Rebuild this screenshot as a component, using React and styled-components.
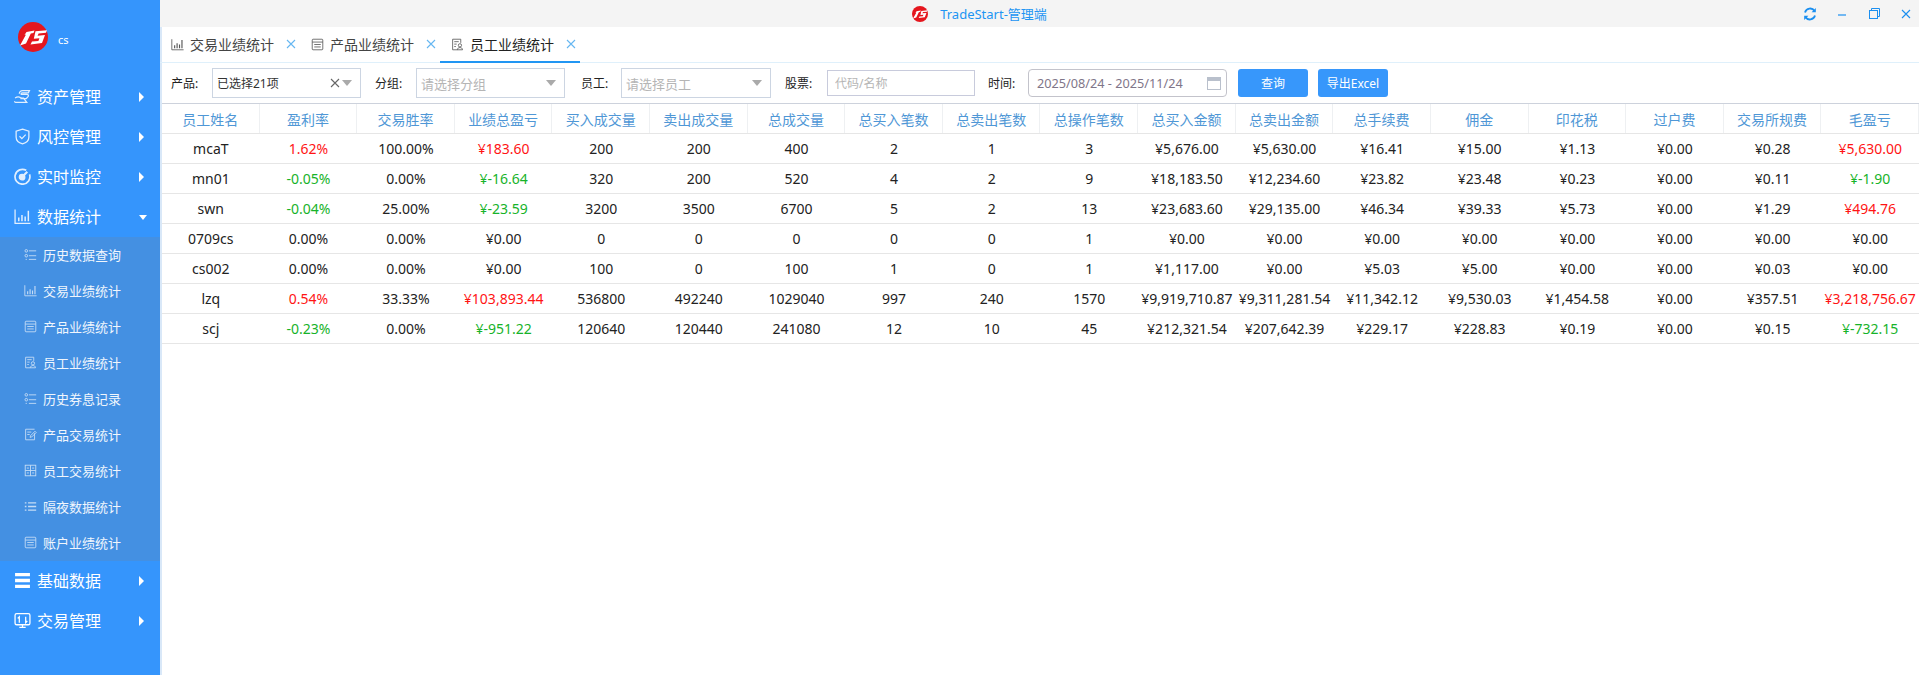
import React from 'react';
import styled, { createGlobalStyle } from 'styled-components';

const columns = [
	'员工姓名', '盈利率', '交易胜率', '业绩总盈亏', '买入成交量', '卖出成交量', '总成交量', '总买入笔数', '总卖出笔数',
	'总操作笔数', '总买入金额', '总卖出金额', '总手续费', '佣金', '印花税', '过户费', '交易所规费', '毛盈亏',
];

const rows = [
	['mcaT', '1.62%', '100.00%', '¥183.60', '200', '200', '400', '2', '1', '3', '¥5,676.00', '¥5,630.00', '¥16.41', '¥15.00', '¥1.13', '¥0.00', '¥0.28', '¥5,630.00'],
	['mn01', '-0.05%', '0.00%', '¥-16.64', '320', '200', '520', '4', '2', '9', '¥18,183.50', '¥12,234.60', '¥23.82', '¥23.48', '¥0.23', '¥0.00', '¥0.11', '¥-1.90'],
	['swn', '-0.04%', '25.00%', '¥-23.59', '3200', '3500', '6700', '5', '2', '13', '¥23,683.60', '¥29,135.00', '¥46.34', '¥39.33', '¥5.73', '¥0.00', '¥1.29', '¥494.76'],
	['0709cs', '0.00%', '0.00%', '¥0.00', '0', '0', '0', '0', '0', '1', '¥0.00', '¥0.00', '¥0.00', '¥0.00', '¥0.00', '¥0.00', '¥0.00', '¥0.00'],
	['cs002', '0.00%', '0.00%', '¥0.00', '100', '0', '100', '1', '0', '1', '¥1,117.00', '¥0.00', '¥5.03', '¥5.00', '¥0.00', '¥0.00', '¥0.03', '¥0.00'],
	['lzq', '0.54%', '33.33%', '¥103,893.44', '536800', '492240', '1029040', '997', '240', '1570', '¥9,919,710.87', '¥9,311,281.54', '¥11,342.12', '¥9,530.03', '¥1,454.58', '¥0.00', '¥357.51', '¥3,218,756.67'],
	['scj', '-0.23%', '0.00%', '¥-951.22', '120640', '120440', '241080', '12', '10', '45', '¥212,321.54', '¥207,642.39', '¥229.17', '¥228.83', '¥0.19', '¥0.00', '¥0.15', '¥-732.15'],
];

// columns coloured by the sign of their value
const signedColumns = [1, 3, 17];

const toneOf = (value, index) => {
	if (!signedColumns.includes(index)) return 'plain';
	if (value.includes('-')) return 'down';
	return /[1-9]/.test(value) ? 'up' : 'plain';
};

const Logo = ({ size }) => (
	<svg width={size} height={size} viewBox="0 0 30 30">
		<circle cx="15" cy="15" r="15" fill="#e5161d" />
		<path d="M8.5 10 L16.5 8.5 L15.5 11 L12.8 11.6 L8 21.5 L2 23.5 L8 12.6 L6.5 13 Z" fill="#fff" />
		<path d="M17.5 9.2 L29 8.2 L28 10.8 L20.6 11.4 L19.6 13.8 L27 13 L24 21 L12.5 22.4 L14 19.6 L20.4 19 L21.4 16.2 L15.8 16.8 Z" fill="#fff" />
	</svg>
);

const Line = ({ children, size = 16, strokeWidth = 1.2 }) => (
	<svg width={size} height={size} viewBox="0 0 16 16" fill="none" stroke="currentColor" strokeWidth={strokeWidth}>
		{children}
	</svg>
);

const icons = {
	asset: (
		<>
			<path d="M5 5.5C5 3.5 6.5 2.5 8 2.5H14.5L13.5 4.5H8C7 4.5 6.5 5 6.8 6H12C13.5 6 14 7 13.2 8.2L11.5 10H6" />
			<path d="M1 9.5C3 8 4.5 8 6 9C7 9.6 8 9.6 9 9.6L12 13.5H1.5C0.8 13.5 0.5 13 0.8 12.5" />
		</>
	),
	shield: (
		<>
			<path d="M8 1L14 3V8.5C14 12 11 14.2 8 15C5 14.2 2 12 2 8.5V3Z" />
			<path d="M5.2 7.8L7.4 10L11 6.2" />
		</>
	),
	gauge: (
		<>
			<path d="M11.5 2.2A7 7 0 1 0 14.6 6" strokeWidth="1.6" />
			<circle cx="7.6" cy="8.6" r="2.6" fill="currentColor" />
			<path d="M9 7L12.5 3.5" strokeWidth="2" />
		</>
	),
	bars: (
		<>
			<path d="M1 1.5V14.5H15.5" />
			<path d="M4.5 12.5V9M7.5 12.5V6.5M10.5 12.5V8M13.5 12.5V2.5" strokeWidth="1.4" />
		</>
	),
	menu: <path d="M1 2.5H15M1 8H15M1 13.5H15" strokeWidth="3.2" />,
	trade: (
		<>
			<rect x="1" y="1.5" width="14" height="10.5" rx="1.5" />
			<path d="M5 14.5H11M8 12V14.5M5 10V4.5L3.5 6M11 4.5V10L12.5 8.5" />
		</>
	),
	filter: (
		<>
			<circle cx="2.8" cy="3.5" r="1.6" />
			<circle cx="2.8" cy="9.5" r="1.6" />
			<path d="M6 3.5H15M6 9.5H15M6 14H15M2 14H3.5" />
		</>
	),
	sheet: (
		<>
			<rect x="1.5" y="1.5" width="13" height="13" rx="1" />
			<path d="M1.5 5H14.5M4 8H12M4 11H12" />
		</>
	),
	staff: (
		<>
			<path d="M8 14.5H2V1.5H12V6" />
			<path d="M4 4.5H9.5M4 7.5H7M4 10.5H6" />
			<circle cx="11" cy="9" r="2" />
			<path d="M7.8 14.5C8 12.5 9.3 11.8 11 11.8C12.7 11.8 14 12.5 14.2 14.5Z" />
		</>
	),
	edit: (
		<>
			<path d="M13 6.5V14.5H2V1.5H13" />
			<path d="M4 5H9M4 8H7" />
			<path d="M7.5 11.5L8 9.5L13.5 4L15 5.5L9.5 11Z" />
		</>
	),
	grid: (
		<>
			<rect x="1.5" y="1.5" width="13" height="13" />
			<path d="M1.5 8H14.5M8 1.5V14.5M3.5 5H6M10 5H12.5M3.5 11H6M10 11H12.5" />
		</>
	),
	list: <path d="M1 3.5H3M5 3.5H15M1 8H3M5 8H15M1 12.5H3M5 12.5H15" strokeWidth="1.6" />,
};

const menuTop = [
	{ icon: 'asset', label: '资产管理' },
	{ icon: 'shield', label: '风控管理' },
	{ icon: 'gauge', label: '实时监控' },
];

const subMenu = [
	{ icon: 'filter', label: '历史数据查询' },
	{ icon: 'bars', label: '交易业绩统计' },
	{ icon: 'sheet', label: '产品业绩统计' },
	{ icon: 'staff', label: '员工业绩统计' },
	{ icon: 'filter', label: '历史券息记录' },
	{ icon: 'edit', label: '产品交易统计' },
	{ icon: 'grid', label: '员工交易统计' },
	{ icon: 'list', label: '隔夜数据统计' },
	{ icon: 'sheet', label: '账户业绩统计' },
];

const tabs = [
	{ icon: 'bars', label: '交易业绩统计' },
	{ icon: 'sheet', label: '产品业绩统计' },
	{ icon: 'staff', label: '员工业绩统计', active: true },
];

const MenuItem = ({ icon, label, open, solid }) => (
	<TopItem>
		<TopIcon $solid={solid}><Line size={17}>{icons[icon]}</Line></TopIcon>
		<span>{label}</span>
		<Caret $open={open} />
	</TopItem>
);

const Close = () => (
	<svg width="10" height="10" viewBox="0 0 10 10" stroke="currentColor" strokeWidth="1.1" fill="none">
		<path d="M1 1L9 9M9 1L1 9" />
	</svg>
);

const App = () => (
	<Page>
		<GlobalStyle />
		<Sidebar>
			<Brand>
				<Logo size={30} />
				<BrandName>cs</BrandName>
			</Brand>
			{menuTop.map((item) => <MenuItem key={item.label} {...item} />)}
			<MenuItem icon="bars" label="数据统计" open />
			<SubList>
				{subMenu.map((item) => (
					<SubItem key={item.label}>
						<SubIcon><Line size={13} strokeWidth={1.1}>{icons[item.icon]}</Line></SubIcon>
						<span>{item.label}</span>
					</SubItem>
				))}
			</SubList>
			<MenuItem icon="menu" label="基础数据" solid />
			<MenuItem icon="trade" label="交易管理" solid />
		</Sidebar>
		<Main>
			<TitleBar>
				<TitleWrap>
					<Logo size={16} />
					<Title>TradeStart-管理端</Title>
				</TitleWrap>
				<WindowButtons>
					<WindowButton>
						<svg width="14" height="14" viewBox="0 0 14 14" fill="none" stroke="currentColor" strokeWidth="1.8">
							<path d="M2 5.5A5.3 5.3 0 0 1 11.6 4" />
							<path d="M12 8.5A5.3 5.3 0 0 1 2.4 10" />
							<path d="M12.8 1V5.2H8.6Z" fill="currentColor" stroke="none" />
							<path d="M1.2 13V8.8H5.4Z" fill="currentColor" stroke="none" />
						</svg>
					</WindowButton>
					<WindowButton>
						<svg width="10" height="10" viewBox="0 0 10 10" stroke="currentColor" strokeWidth="1.2"><path d="M1 6H9" /></svg>
					</WindowButton>
					<WindowButton>
						<svg width="11" height="11" viewBox="0 0 11 11" fill="none" stroke="currentColor" strokeWidth="1">
							<rect x="0.5" y="2.5" width="8" height="8" />
							<path d="M2.5 2.5V0.5H10.5V8.5H8.5" />
						</svg>
					</WindowButton>
					<WindowButton><Close /></WindowButton>
				</WindowButtons>
			</TitleBar>
			<TabBar>
				{tabs.map((tab) => (
					<Tab key={tab.label} $active={tab.active}>
						<TabIcon><Line size={13} strokeWidth={1}>{icons[tab.icon]}</Line></TabIcon>
						<TabLabel>{tab.label}</TabLabel>
						<TabClose><Close /></TabClose>
					</Tab>
				))}
			</TabBar>
			<Toolbar>
				<Field $width={204}>
					<FieldLabel>产品:</FieldLabel>
					<Select $width={149}>
						<span>已选择21项</span>
						<ClearMark><Close /></ClearMark>
						<SelectArrow />
					</Select>
				</Field>
				<Field $width={206}>
					<FieldLabel>分组:</FieldLabel>
					<Select $width={149} $empty>
						<span>请选择分组</span>
						<SelectArrow />
					</Select>
				</Field>
				<Field $width={204}>
					<FieldLabel $width={40}>员工:</FieldLabel>
					<Select $width={150} $empty>
						<span>请选择员工</span>
						<SelectArrow />
					</Select>
				</Field>
				<Field $width={203}>
					<FieldLabel $width={42}>股票:</FieldLabel>
					<TextBox placeholder="代码/名称" />
				</Field>
				<Field $width={250}>
					<FieldLabel $width={40}>时间:</FieldLabel>
					<DateBox>
						<span>2025/08/24 - 2025/11/24</span>
						<svg width="14" height="14" viewBox="0 0 14 14" fill="none" stroke="#b9c0cc">
							<rect x="0.5" y="1.5" width="13" height="12" />
							<rect x="0.5" y="1.5" width="13" height="3" fill="#b9c0cc" />
						</svg>
					</DateBox>
				</Field>
				<QueryButton $width={70}>查询</QueryButton>
				<QueryButton $width={70}>导出Excel</QueryButton>
			</Toolbar>
			<Table>
				<thead>
					<tr>
						{columns.map((name) => <HeadCell key={name}><HeadText>{name}</HeadText></HeadCell>)}
					</tr>
				</thead>
				<tbody>
					{rows.map((row) => (
						<tr key={row[0]}>
							{row.map((value, i) => <Cell key={i} $tone={toneOf(value, i)}>{value}</Cell>)}
						</tr>
					))}
				</tbody>
			</Table>
		</Main>
	</Page>
);

export default App;

const toneColors = { plain: '#222', up: '#ff1414', down: '#17b32a' };

const GlobalStyle = createGlobalStyle`
	html, body {
		margin: 0;
		height: 100%;
		overflow: hidden;
		background: #fff;
		font-family: "Noto Sans", "Noto Sans CJK SC", sans-serif;
	}
	* {
		box-sizing: border-box;
	}
`;

const Page = styled.div`
	display: flex;
	width: 1919px;
	height: 675px;
`;

const Sidebar = styled.aside`
	flex: 0 0 160px;
	background: #3595fc;
	color: #fff;
`;

const Brand = styled.div`
	display: flex;
	align-items: center;
	height: 77px;
	padding: 0 0 3px 18px;
`;

const BrandName = styled.span`
	margin: 4px 0 0 10px;
	font-size: 11px;
`;

const TopItem = styled.div`
	display: flex;
	align-items: center;
	height: 40px;
	padding: 0 0 2px 14px;
	font-size: 16px;
	position: relative;
`;

const TopIcon = styled.span`
	display: flex;
	width: 23px;
	opacity: ${({ $solid }) => ($solid ? 1 : 0.85)};
`;

const Caret = styled.i`
	position: absolute;
	top: 50%;
	${({ $open }) => ($open
		? `
		right: 13px;
		margin-top: -2px;
		border-top: 5px solid #fff;
		border-left: 4.5px solid transparent;
		border-right: 4.5px solid transparent;
	`
		: `
		right: 16px;
		margin-top: -5px;
		border-left: 5px solid #fff;
		border-top: 5px solid transparent;
		border-bottom: 5px solid transparent;
	`)}
`;

const SubList = styled.div`
	background: #4490e2;
`;

const SubItem = styled.div`
	display: flex;
	align-items: center;
	height: 36px;
	padding: 0 0 2px 24px;
	font-size: 13px;
	color: #f0f6fd;
`;

const SubIcon = styled.span`
	display: flex;
	width: 19px;
	opacity: 0.75;
`;

const Main = styled.main`
	flex: 1;
	min-width: 0;
	border-left: 2px solid #d9e8f8;
	display: flex;
	flex-direction: column;
`;

const TitleBar = styled.header`
	position: relative;
	display: flex;
	align-items: center;
	justify-content: center;
	height: 27px;
	margin-left: -2px;
	background: #f4f4f4;
`;

const TitleWrap = styled.div`
	display: flex;
	align-items: center;
	gap: 12px;
	margin-right: 120px;
`;

const Title = styled.span`
	font-size: 13px;
	color: #2094f3;
`;

const WindowButtons = styled.div`
	position: absolute;
	right: 0;
	top: 0;
	display: flex;
	gap: 6px;
	height: 27px;
`;

const WindowButton = styled.span`
	display: flex;
	align-items: center;
	justify-content: center;
	width: 26px;
	color: #1b8ff0;
`;

const TabBar = styled.nav`
	display: flex;
	height: 36px;
	margin-left: -2px;
	border-bottom: 1px solid #dff0fb;
`;

const Tab = styled.div`
	display: flex;
	align-items: center;
	width: 140px;
	height: 36px;
	padding-left: 11px;
	font-size: 14px;
	color: ${({ $active }) => ($active ? '#222' : '#444')};
	border-bottom: 2px solid ${({ $active }) => ($active ? '#2196f3' : 'transparent')};
`;

const TabIcon = styled.span`
	display: flex;
	width: 19px;
	color: #555;
`;

const TabLabel = styled.span`
	width: 84px;
	white-space: nowrap;
`;

const TabClose = styled.span`
	display: flex;
	margin-left: 12px;
	color: #66b7f1;
`;

const Toolbar = styled.div`
	display: flex;
	align-items: center;
	height: 40px;
	padding-left: 9px;
	font-size: 12px;
	color: #222;
`;

const Field = styled.div`
	display: flex;
	align-items: center;
	width: ${({ $width }) => $width}px;
`;

const FieldLabel = styled.label`
	width: ${({ $width }) => $width || 41}px;
	white-space: nowrap;
`;

const Select = styled.div`
	position: relative;
	display: flex;
	align-items: center;
	width: ${({ $width }) => $width}px;
	height: 30px;
	padding-left: ${({ $empty }) => ($empty ? 4 : 4)}px;
	border: 1px solid #ccd5e2;
	font-size: ${({ $empty }) => ($empty ? 13 : 12)}px;
	color: ${({ $empty }) => ($empty ? '#b5b5b5' : '#333')};
`;

const ClearMark = styled.span`
	position: absolute;
	right: 20px;
	top: 9px;
	display: flex;
	color: #666;
`;

const SelectArrow = styled.i`
	position: absolute;
	right: 8px;
	top: 11px;
	border-top: 6px solid #aaa;
	border-left: 5px solid transparent;
	border-right: 5px solid transparent;
`;

const TextBox = styled.input`
	width: 148px;
	height: 26px;
	padding: 0 7px;
	border: 1px solid #c8cbdc;
	outline: none;
	font: inherit;

	&::placeholder {
		color: #b5b5b5;
	}
`;

const DateBox = styled.div`
	display: flex;
	align-items: center;
	justify-content: space-between;
	width: 199px;
	height: 28px;
	padding: 0 5px 0 8px;
	border: 1px solid #c3c3cb;
	border-radius: 4px;
	font-size: 12.7px;
	color: #7f7689;
`;

const QueryButton = styled.button`
	width: ${({ $width }) => $width}px;
	height: 28px;
	margin-right: 10px;
	padding: 0;
	border: none;
	border-radius: 3px;
	background: #3797fb;
	color: #fff;
	font: inherit;
`;

const Table = styled.table`
	width: 100%;
	table-layout: fixed;
	border-collapse: collapse;
	border-top: 1px solid #cdd2dc;
	text-align: center;
	font-size: 14px;
`;

const HeadCell = styled.th`
	height: 30px;
	padding: 0;
	font-weight: 400;
	color: #4f97d6;
	border-bottom: 1px solid #e6e6e6;
`;

const HeadText = styled.div`
	display: flex;
	align-items: center;
	justify-content: center;
	height: 29px;
	white-space: nowrap;
	border-right: 1px solid #eef0f2;
`;

const Cell = styled.td`
	height: 30px;
	padding: 0;
	white-space: nowrap;
	color: ${({ $tone }) => toneColors[$tone]};
	border-bottom: 1px solid #e6e6e6;
`;
